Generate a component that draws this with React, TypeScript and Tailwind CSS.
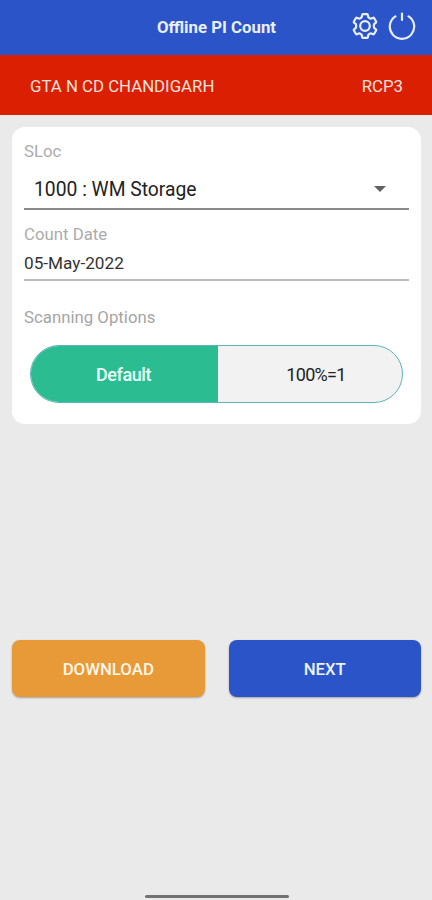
function GearIcon() {
  return (
    <svg width="28" height="28" viewBox="0 0 28 28" fill="none" stroke="currentColor" strokeWidth="2.2" strokeLinejoin="round">
      <path d="M11.9 2.2h4.2q.7 0 .8.8l.3 1.8q.1.6.7.9l1.2.7q.6.3 1.2.1l1.8-.7q.7-.3 1.1.4l1.9 3.3q.4.7-.2 1.2l-1.5 1.2q-.5.4-.5 1v2.2q0 .6.5 1l1.5 1.2q.6.5.2 1.2l-1.9 3.3q-.4.7-1.1.4l-1.8-.7q-.6-.2-1.2.1l-1.2.7q-.6.3-.7.9l-.3 1.8q-.1.8-.8.8h-4.2q-.7 0-.8-.8l-.3-1.8q-.1-.6-.7-.9l-1.2-.7q-.6-.3-1.2-.1l-1.8.7q-.7.3-1.1-.4l-1.9-3.3q-.4-.7.2-1.2l1.5-1.2q.5-.4.5-1v-2.2q0-.6-.5-1l-1.5-1.2q-.6-.5-.2-1.2l1.9-3.3q.4-.7 1.1-.4l1.8.7q.6.2 1.2-.1l1.2-.7q.6-.3.7-.9l.3-1.8q.1-.8.8-.8Z" />
      <circle cx="14" cy="14" r="4.8" />
    </svg>
  );
}

function PowerIcon() {
  return (
    <svg width="28" height="30" viewBox="0 0 28 30" fill="none" stroke="currentColor" strokeWidth="2.2" strokeLinecap="round">
      <path d="M7.4 5.4A12.2 12.2 0 1 0 20.6 5.4" />
      <path d="M14 2.5V9" />
    </svg>
  );
}

export default function App() {
  return (
    <div className="flex h-[900px] w-[432px] flex-col overflow-hidden bg-[#eaeaea] font-['Roboto',sans-serif]">
      <header className="grid h-[55px] shrink-0 grid-cols-[1fr_auto_1fr] items-center bg-[#2c54c9] text-[#e9effd]">
        <span />
        <h1 className="pb-0.5 pl-px text-[16.8px] leading-6 font-bold whitespace-nowrap">Offline PI Count</h1>
        <div className="flex items-center justify-end gap-[9px] pr-4 pb-[3px]">
          <GearIcon />
          <PowerIcon />
        </div>
      </header>

      <div className="flex h-[59.5px] shrink-0 items-center justify-between bg-[#da1f03] pt-[3px] pr-[29px] pl-[30px] text-[16.8px] text-[#fde3dc]">
        <span>GTA N CD CHANDIGARH</span>
        <span>RCP3</span>
      </div>

      <main className="flex flex-1 flex-col px-3 pt-3">
        <section className="mr-[-1px] h-[297.5px] shrink-0 rounded-[13px] bg-white px-3 pt-3">
          <div className="h-6 text-[16.8px] leading-6 text-[#acacac]">SLoc</div>
          <div className="flex h-[47px] items-center justify-between border-b-2 border-[#8a8a8a] pt-[7px] pr-[23px] pl-2.5 text-[19.3px] text-[#222]">
            <span className="pt-[3px]">1000 : WM Storage</span>
            <svg width="12" height="6" viewBox="0 0 12 6" fill="#606060">
              <path d="M0 0H12L6 6Z" />
            </svg>
          </div>
          <div className="mt-3 h-6 text-[16.8px] leading-6 text-[#acacac]">Count Date</div>
          <div className="h-[35px] border-b-2 border-[#bdbdbd] text-[17.2px] leading-[35px] text-[#333]">05-May-2022</div>
          <div className="mt-6 h-6 text-[16.8px] leading-6 text-[#a5a5a5]">Scanning Options</div>
          <div className="mx-1.5 mt-4 flex h-[58px] overflow-hidden rounded-full border-[1.5px] border-[#5db5bb] bg-[#f2f2f2] text-[18px] tracking-[-0.45px]">
            <div className="flex w-[187px] items-center justify-center bg-[#2bbd91] pt-0.5 pr-0.5 font-medium text-[#e9fff8]">Default</div>
            <div className="flex flex-1 items-center justify-center pt-0.5 pl-3 tracking-[-0.7px] text-[#222]">100%=1</div>
          </div>
        </section>

        <div className="mt-[215.5px] mr-[-1px] grid grid-cols-2 gap-6 text-[16.8px] font-medium">
          <button className="h-[57px] rounded-lg bg-[#e89a38] pt-[3px] text-[#fff7e8] shadow-[0_1px_2px_rgba(0,0,0,0.3)]">DOWNLOAD</button>
          <button className="h-[57px] rounded-lg bg-[#2c54c9] pt-[3px] text-[#edf2ff] shadow-[0_1px_2px_rgba(0,0,0,0.3)]">NEXT</button>
        </div>
      </main>

      <div className="mb-[2px] ml-px h-[3px] w-36 shrink-0 self-center rounded-full bg-[#727272]" />
    </div>
  );
}
